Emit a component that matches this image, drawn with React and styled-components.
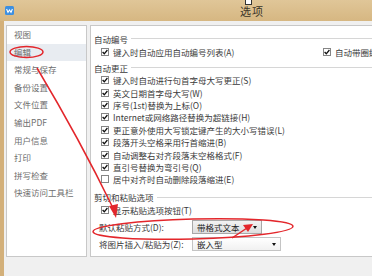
import React from "react";
import styled, { createGlobalStyle } from "styled-components";

const GlobalStyle = createGlobalStyle`
  html, body {
    margin: 0;
    padding: 0;
    background: #f0f0f0;
  }
  body {
    font-family: "Noto Sans CJK SC", "Noto Sans", sans-serif;
  }
`;

const Window = styled.div`
  position: relative;
  width: 372px;
  height: 276px;
  overflow: hidden;
  display: flex;
  flex-direction: column;
  background: #d3b07a;
`;

const TitleBar = styled.div`
  height: 21px;
  flex: none;
  display: flex;
  align-items: center;
  background: linear-gradient(#e0c698, #d6b782);
`;

const AppIcon = styled.svg`
  width: 9px;
  height: 9px;
  margin-left: 5px;
  flex: none;
`;

const Title = styled.span`
  margin-left: 226px;
  font-size: 11px;
  color: #3a3528;
  letter-spacing: 1px;
`;

const Body = styled.div`
  flex: 1;
  margin-left: 4px;
  padding: 4px 0 0 2px;
  background: #f0f0f0;
  display: flex;
  align-items: flex-start;
  gap: 3px;
`;

const Panel = styled.div`
  flex: none;
  width: ${(p) => p.$width}px;
  height: 232px;
  box-sizing: border-box;
  background: #fff;
  border: 1px solid #c8c8c8;
  overflow: hidden;
`;

const NavItem = styled.div`
  height: 17.6px;
  line-height: 17.6px;
  padding-left: 7px;
  font-size: 8.5px;
  color: #6e6e6e;
  white-space: nowrap;
  background: ${(p) => (p.$active ? "#e8ecf1" : "transparent")};
`;

const Content = styled.div`
  padding-top: 6px;
  font-size: 8.5px;
  color: #3a3a3a;
`;

const GroupHead = styled.div`
  display: flex;
  align-items: center;
  height: 13px;
  padding-left: 3px;
  margin-top: ${(p) => p.$top || 0}px;
  white-space: nowrap;

  &::after {
    content: "";
    flex: 1;
    margin-left: 3px;
    border-top: 1px solid #d6d6d6;
  }
`;

const Row = styled.div`
  display: flex;
  align-items: center;
  height: ${(p) => p.$h || 13}px;
  padding-left: ${(p) => p.$indent || 10}px;
  margin-top: ${(p) => p.$top || 0}px;
  white-space: nowrap;
`;

const CheckItem = styled.label`
  display: flex;
  align-items: center;
  gap: 4px;
  flex: none;
  width: ${(p) => (p.$width ? p.$width + "px" : "auto")};
`;

const Box = styled.span`
  width: 8px;
  height: 8px;
  box-sizing: border-box;
  border: 1px solid #858585;
  background: #fff;
  display: flex;
  align-items: center;
  justify-content: center;
  flex: none;
`;

const FieldLabel = styled.span`
  width: 93px;
  flex: none;
`;

const Select = styled.div`
  width: ${(p) => p.$width}px;
  height: 14px;
  box-sizing: border-box;
  border: 1px solid ${(p) => (p.$raised ? "#a8a8a8" : "#c4c4c4")};
  background: ${(p) =>
    p.$raised ? "linear-gradient(#f2f2f2, #dedede)" : "linear-gradient(#ffffff, #f1f1f1)"};
  display: flex;
  align-items: center;
  justify-content: space-between;
  padding: 0 4px 0 4px;
  color: #222;

  &::after {
    content: "";
    border-left: 2.5px solid transparent;
    border-right: 2.5px solid transparent;
    border-top: 3px solid #111;
  }
`;

const Cursor = styled.div`
  position: absolute;
  left: 245px;
  top: -2px;
  width: 5px;
  height: 5px;
  border: 1px solid #333;
  background: #fff;
`;

const Marks = styled.svg`
  position: absolute;
  left: 0;
  top: 0;
  width: 372px;
  height: 276px;
  pointer-events: none;
`;

function Check({ on }) {
  return (
    <Box>
      {on && (
        <svg width="6" height="6" viewBox="0 0 6 6">
          <path d="M0.6 3 L2.3 4.8 L5.4 1" fill="none" stroke="#111" strokeWidth="1.3" />
        </svg>
      )}
    </Box>
  );
}

const navItems = [
  "视图",
  "编辑",
  "常规与保存",
  "备份设置",
  "文件位置",
  "输出PDF",
  "用户信息",
  "打印",
  "拼写检查",
  "快速访问工具栏",
];

const corrections = [
  ["键入时自动进行句首字母大写更正(S)", true],
  ["英文日期首字母大写(W)", true],
  ["序号(1st)替换为上标(O)", true],
  ["Internet或网络路径替换为超链接(H)", true],
  ["更正意外使用大写锁定键产生的大小写错误(L)", true],
  ["段落开头空格采用行首缩进(B)", true],
  ["自动调整右对齐段落末空格格式(F)", true],
  ["直引号替换为弯引号(Q)", true],
  ["居中对齐时自动删除段落缩进(E)", false],
];

export default function App() {
  return (
    <>
      <GlobalStyle />
      <Window>
        <TitleBar>
          <AppIcon viewBox="0 0 9 9">
            <rect x="0" y="0" width="9" height="9" rx="1.5" fill="#3d8fe0" />
            <path d="M1.6 3 L3 6.4 L4.5 4 L6 6.4 L7.4 3" fill="none" stroke="#fff" strokeWidth="1.1" />
          </AppIcon>
          <Title>选项</Title>
        </TitleBar>
        <Body>
          <Panel $width={81}>
            {navItems.map((t) => (
              <NavItem key={t} $active={t === "编辑"}>
                {t}
              </NavItem>
            ))}
          </Panel>
          <Panel $width={300}>
            <Content>
              <GroupHead>自动编号</GroupHead>
              <Row>
                <CheckItem $width={222}>
                  <Check on />
                  键入时自动应用自动编号列表(A)
                </CheckItem>
                <CheckItem>
                  <Check on />
                  自动带圈编号(N)
                </CheckItem>
              </Row>
              <GroupHead $top={3}>自动更正</GroupHead>
              {corrections.map(([t, on]) => (
                <Row key={t} $h={12.4}>
                  <CheckItem>
                    <Check on={on} />
                    {t}
                  </CheckItem>
                </Row>
              ))}
              <GroupHead $top={5.4}>剪切和粘贴选项</GroupHead>
              <Row>
                <CheckItem>
                  <Check on />
                  显示粘贴选项按钮(T)
                </CheckItem>
              </Row>
              <Row $h={16} $indent={8} $top={2.5}>
                <FieldLabel>默认粘贴方式(D):</FieldLabel>
                <Select $width={70} $raised>
                  带格式文本
                </Select>
              </Row>
              <Row $h={16} $indent={8} $top={1}>
                <FieldLabel>将图片插入/粘贴为(Z):</FieldLabel>
                <Select $width={89}>嵌入型</Select>
              </Row>
            </Content>
          </Panel>
        </Body>
        <Cursor />
        <Marks viewBox="0 0 372 276">
          <g fill="none" stroke="#e3262b" strokeWidth="1.5">
            <ellipse cx="26.5" cy="52" rx="16.5" ry="5.5" />
            <ellipse cx="193" cy="229" rx="100" ry="10" transform="rotate(-1.5 193 229)" />
            <path d="M37 68 Q80 140 113 208" />
            <path d="M232 238 L247 228" />
          </g>
          <g fill="#e3262b">
            <path d="M109 206 L118 204 L116 218 Z" />
            <path d="M243 225 L253 224 L248 232 Z" />
          </g>
        </Marks>
      </Window>
    </>
  );
}
